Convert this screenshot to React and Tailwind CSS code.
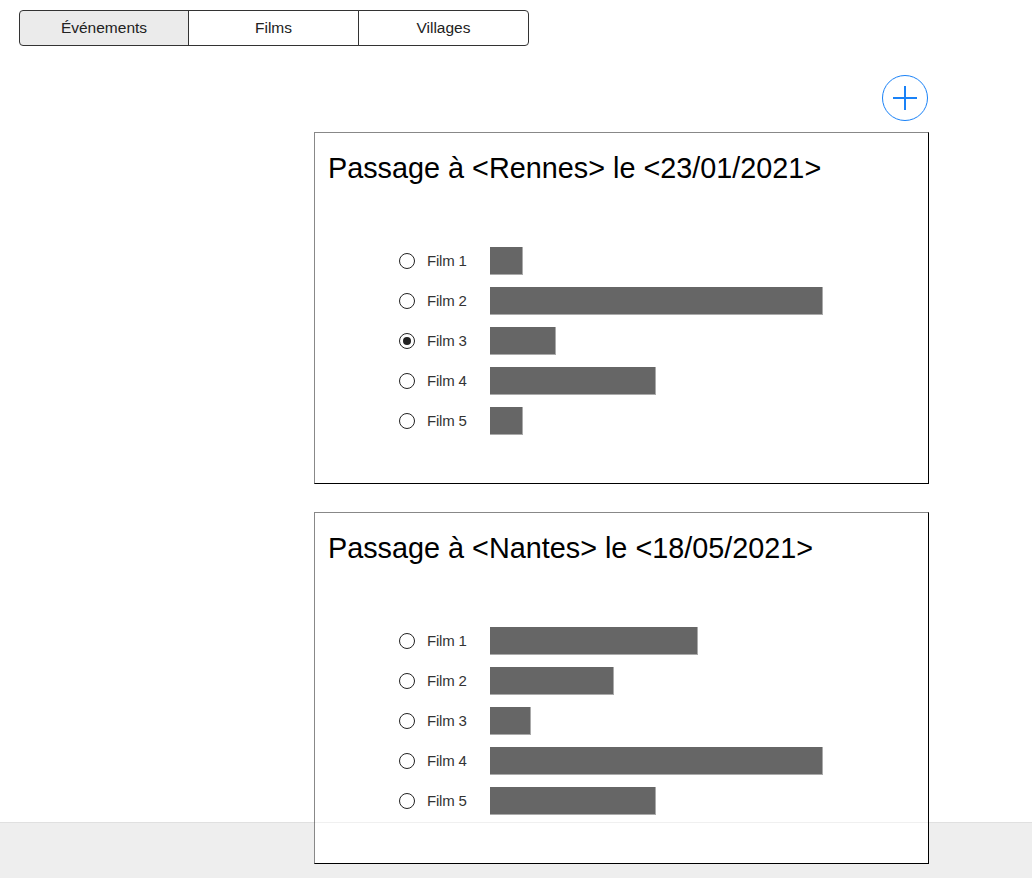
import React from "react";

const EVENTS = [
  {
    city: "Rennes",
    date: "23/01/2021",
    selected: 2,
    films: [33, 333, 66, 166, 33],
  },
  {
    city: "Nantes",
    date: "18/05/2021",
    selected: -1,
    films: [208, 124, 41, 333, 166],
  },
];

const TABS = ["Événements", "Films", "Villages"];

function Radio({ checked }) {
  return (
    <span className="w-4 h-4 rounded-full border-[1.5px] border-[#222] flex items-center justify-center shrink-0">
      {checked && <span className="w-2 h-2 rounded-full bg-[#222]" />}
    </span>
  );
}

function EventCard({ event }) {
  return (
    <div className="relative z-10 h-[352px] bg-white border border-t-[#888] border-l-[#888] border-r-black border-b-black px-[13px] pt-[20px]">
      <h2 className="text-[28.8px] leading-[30px] text-black">
        Passage à &lt;{event.city}&gt; le &lt;{event.date}&gt;
      </h2>
      <div className="mt-[58px] ml-[71px] flex flex-col">
        {event.films.map((w, i) => (
          <div key={i} className="h-[40px] flex items-center">
            <Radio checked={i === event.selected} />
            <span className="ml-[12px] w-[63px] text-[15px] text-[#333] tracking-[-0.2px]">
              Film {i + 1}
            </span>
            <div
              className="h-[28px] bg-[#666666] border-b border-r border-[#aaa]"
              style={{ width: `${w}px` }}
            />
          </div>
        ))}
      </div>
    </div>
  );
}

export default function App() {
  return (
    <div className="relative min-h-[878px] bg-white font-['Liberation_Sans',Arial,sans-serif]">
      <div className="pt-[10px] pl-[19px] flex">
        {TABS.map((t, i) => (
          <button
            key={t}
            type="button"
            className={`h-[36px] border border-[#333] text-[15.5px] text-[#222] ${
              i === 0 ? "w-[170px] bg-[#ebebeb] rounded-l-[4px]" : "w-[171px] bg-white -ml-px"
            } ${i === TABS.length - 1 ? "rounded-r-[4px]" : ""}`}
          >
            {t}
          </button>
        ))}
      </div>

      <div className="ml-[314px] w-[615px]">
        <div className="flex justify-end mt-[29px] mb-[11px] pr-[1px]">
          <button
            type="button"
            className="w-[46px] h-[46px] rounded-full border border-[#1a82f7] flex items-center justify-center"
          >
            <svg width="26" height="26" viewBox="0 0 26 26">
              <path d="M13 1v24M1 13h24" stroke="#1a82f7" strokeWidth="2" />
            </svg>
          </button>
        </div>
        <div className="flex flex-col gap-[28px]">
          {EVENTS.map((e) => (
            <EventCard key={e.city} event={e} />
          ))}
        </div>
      </div>

      <div className="fixed left-0 right-0 bottom-0 h-[56px] bg-[#eeeeee]" />
      <div className="fixed left-0 right-0 bottom-[55px] h-px bg-black/[0.06] z-20" />
    </div>
  );
}
